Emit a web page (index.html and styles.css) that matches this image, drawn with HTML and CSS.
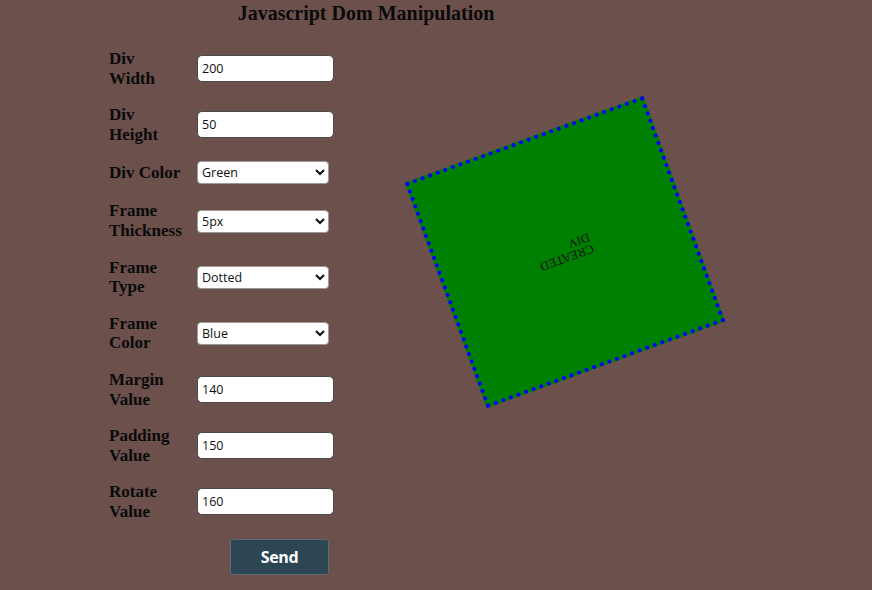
FILE: index.html
```html
<!DOCTYPE html>
<html>
<head>
<meta charset="utf-8">
<title>Javascript Dom Manipulation</title>
<link rel="stylesheet" href="styles.css">
</head>
<body>
<h1 class="title">Javascript Dom Manipulation</h1>
<div class="main">
  <form class="form">
    <div class="row"><label class="lbl">Div Width</label><input class="field" type="text" value="200"></div>
    <div class="row"><label class="lbl">Div Height</label><input class="field" type="text" value="50"></div>
    <div class="row"><label class="lbl">Div Color</label><select class="pick"><option>Green</option></select></div>
    <div class="row"><label class="lbl">Frame Thickness</label><select class="pick"><option>5px</option></select></div>
    <div class="row"><label class="lbl">Frame Type</label><select class="pick"><option>Dotted</option></select></div>
    <div class="row"><label class="lbl">Frame Color</label><select class="pick"><option>Blue</option></select></div>
    <div class="row"><label class="lbl">Margin Value</label><input class="field" type="text" value="140"></div>
    <div class="row"><label class="lbl">Padding Value</label><input class="field" type="text" value="150"></div>
    <div class="row"><label class="lbl">Rotate Value</label><input class="field" type="text" value="160"></div>
    <div class="actions"><button class="send" type="button">Send</button></div>
  </form>
  <div class="stage">
    <div class="created"><span class="created-text">CREATED DIV</span></div>
  </div>
</div>
</body>
</html>
```

FILE: styles.css
```css
html, body {
  margin: 0;
  padding: 0;
  background: #6b504b;
  height: 100%;
  overflow: hidden;
}

body {
  font-family: "Liberation Serif", "Times New Roman", serif;
  color: #0a0a0a;
}

.title {
  width: 732px;
  margin: 2px 0 0 0;
  text-align: center;
  font-size: 20px;
  font-weight: bold;
  line-height: 23px;
}

.main {
  display: flex;
  align-items: flex-start;
  padding-left: 109px;
  margin-top: 24px;
}

.form {
  display: flex;
  flex-direction: column;
  gap: 17.1px;
  width: 225px;
}

.row {
  display: flex;
  align-items: center;
  gap: 16px;
}

.lbl {
  width: 72px;
  flex: none;
  font-size: 17px;
  font-weight: bold;
  line-height: 19.55px;
}

.field {
  box-sizing: border-box;
  width: 137px;
  height: 27px;
  margin: 0;
  padding: 0 4px;
  border: 1px solid #4a4a4a;
  border-radius: 5px;
  background: #fff;
  font-family: "Open Sans", "Noto Sans", sans-serif;
  font-size: 12.5px;
  color: #111;
}

.pick {
  box-sizing: border-box;
  width: 132px;
  height: 23px;
  margin: 0;
  padding: 0;
  border: 1px solid #9a9a9a;
  border-radius: 4px;
  background: #fff;
  font-family: "Open Sans", "Noto Sans", sans-serif;
  font-size: 12.5px;
  color: #111;
}

.actions {
  display: flex;
  padding-left: 121px;
  margin-top: 0;
}

.send {
  box-sizing: border-box;
  width: 99px;
  height: 36px;
  border: 1px solid #5d6a70;
  border-radius: 3px;
  background: #2c4653;
  color: #fff;
  font-family: "Open Sans", "Noto Sans", sans-serif;
  font-size: 16px;
  font-weight: bold;
  letter-spacing: -0.3px;
}

.stage {
  margin-left: 104px;
  margin-top: 83px;
}

.created {
  box-sizing: border-box;
  width: 254px;
  height: 240px;
  background: #008000;
  border: 4px dotted #0000ff;
  transform: rotate(160deg);
  display: flex;
  align-items: center;
  justify-content: center;
}

.created-text {
  display: block;
  width: 40px;
  font-size: 12.5px;
  line-height: 12px;
  color: #111;
  text-align: left;
  transform: translateX(-8px);
}
```
